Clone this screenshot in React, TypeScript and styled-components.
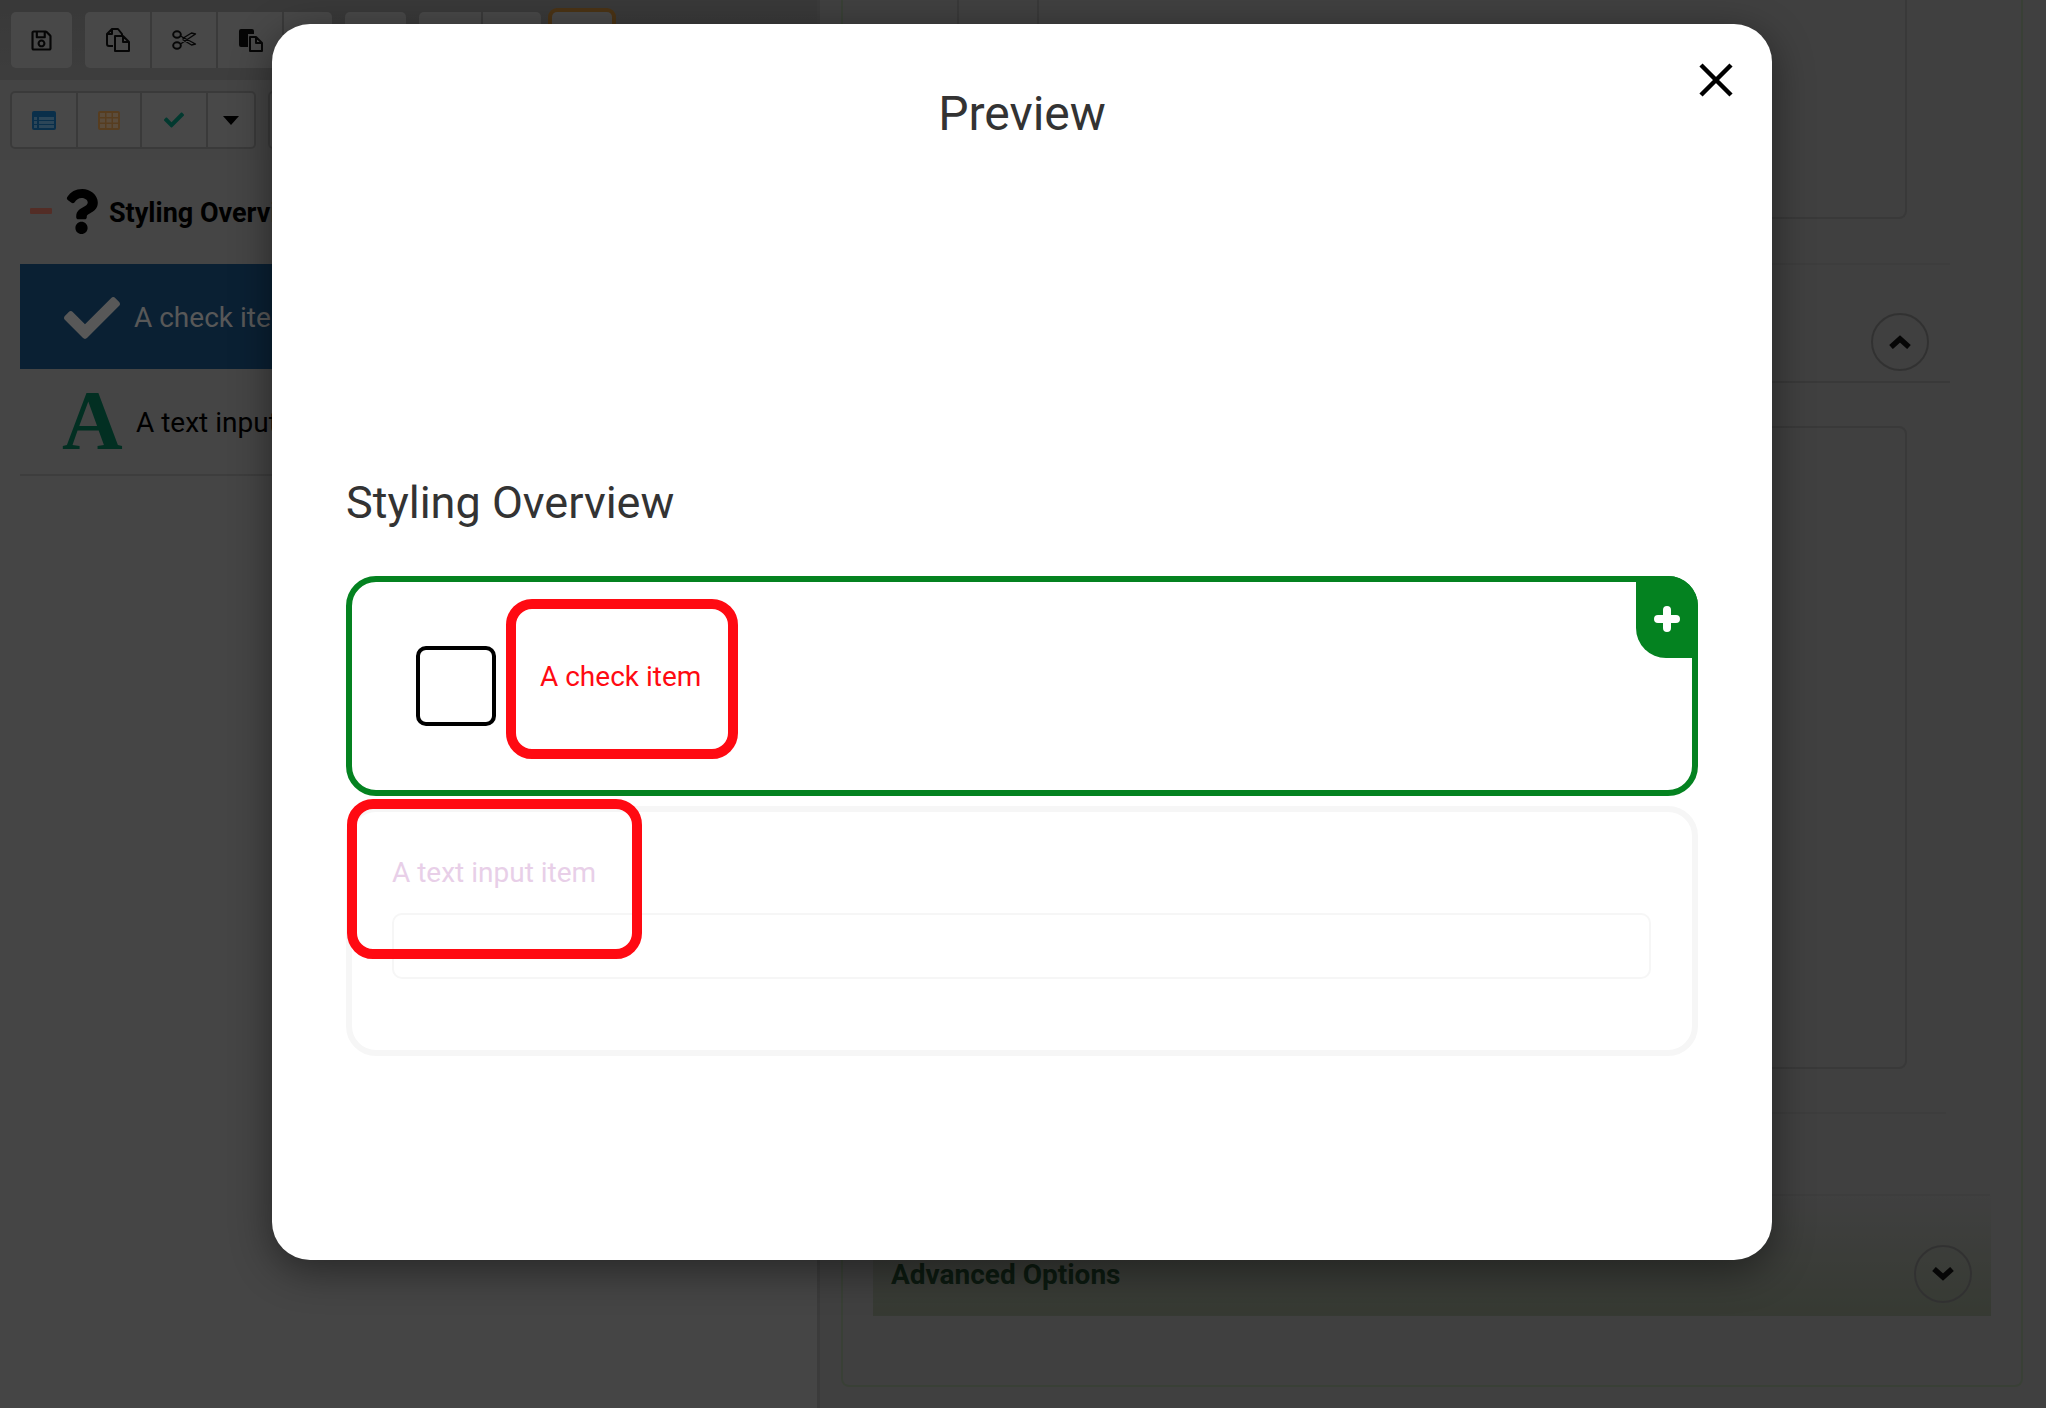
import React from "react";
import styled, { createGlobalStyle } from "styled-components";
import { FaCheck, FaQuestion, FaRegSave } from "react-icons/fa";

const Global = createGlobalStyle`
  html, body { margin: 0; padding: 0; background: #a0a0a0; }
  body { font-family: Roboto, "Liberation Sans", sans-serif; }
`;

const Page = styled.div`
  position: relative;
  width: 2046px;
  height: 1408px;
  overflow: hidden;
  display: flex;
`;

const LeftPanel = styled.aside`
  width: 820px;
  flex: none;
  background: #acacac;
  border-right: 3px solid #949494;
  box-sizing: border-box;
`;

const ToolRow = styled.div<{ $dark?: boolean }>`
  height: 80px;
  box-sizing: border-box;
  display: flex;
  align-items: center;
  gap: 13px;
  padding: 0 0 0 11px;
  background: ${(p) => (p.$dark ? "linear-gradient(#8e8e8e, #9a9a9a)" : "#aaaaaa")};
`;

const ToolGroup = styled.div<{ $framed?: boolean; $focus?: boolean }>`
  display: flex;
  height: ${(p) => (p.$framed ? 58 : 56)}px;
  box-sizing: border-box;
  border-radius: 5px;
  background: #b4b4b4;
  ${(p) => p.$framed && "border: 2px solid #929292; margin-left: -1px;"}
  ${(p) => p.$focus && "box-shadow: 0 0 0 4px #b98035; margin-left: -2px;"}
`;

const ToolButton = styled.div<{ $w: number }>`
  width: ${(p) => p.$w}px;
  display: flex;
  align-items: center;
  justify-content: center;
  color: #111;
  box-sizing: border-box;
  & + & { border-left: 2px solid #929292; }
`;

const Tree = styled.div`
  padding: 13px 0 0 20px;
`;

const TreeHeader = styled.div`
  height: 80px;
  margin: 0 0 11px 10px;
  display: flex;
  align-items: center;
`;

const Minus = styled.span`
  width: 22px;
  height: 6px;
  margin-top: -5px;
  border-radius: 1px;
  background: #d07060;
  margin-right: 7px;
`;

const QuestionMark = styled.span`
  display: flex;
  margin-top: -4px;
  color: #000;
`;

const Heading = styled.span`
  font-size: 27px;
  font-weight: 700;
  color: #000;
  margin-left: 5px;
  white-space: nowrap;
`;

const TreeItem = styled.div<{ $selected?: boolean }>`
  height: 105px;
  box-sizing: border-box;
  padding: 2px 0 0 44px;
  display: flex;
  align-items: center;
  gap: ${(p) => (p.$selected ? 14 : 14)}px;
  font-size: 28px;
  white-space: nowrap;
  background: ${(p) => (p.$selected ? "#195080" : "transparent")};
  color: ${(p) => (p.$selected ? "#dcdcdc" : "#000")};
`;

const FontGlyph = styled.span`
  width: 60px;
  margin-left: -2px;
  margin-top: -3px;
  font-family: "Liberation Serif", serif;
  font-weight: 700;
  font-size: 84px;
  line-height: 1;
  color: #057555;
`;

const TreeRule = styled.div`
  height: 2px;
  background: #999;
`;

const RightPanel = styled.main`
  flex: 1;
  background: #a0a0a0;
  padding: 0 0 21px 21px;
  box-sizing: border-box;
  display: flex;
`;

const OuterCard = styled.section`
  width: 1182px;
  box-sizing: border-box;
  border: 2px solid #90a087;
  border-top: 0;
  border-radius: 0 0 8px 8px;
  padding: 0 0 69px 30px;
  display: flex;
  flex-direction: column;
`;

const Editor = styled.div<{ $h: number; $top?: boolean }>`
  width: 950px;
  height: ${(p) => p.$h}px;
  flex: none;
  margin-left: 84px;
  box-sizing: border-box;
  border: 2px solid #8e8e8e;
  ${(p) =>
    p.$top
      ? `border-top: 0; border-radius: 0 0 8px 8px;
         &::before { content: ""; display: block; width: 78px; height: 100%; border-right: 2px solid #8e8e8e; }`
      : "border-radius: 8px;"}
`;

const SectionHead = styled.div<{ $mt: number; $h: number }>`
  width: 1077px;
  height: ${(p) => p.$h}px;
  flex: none;
  margin-top: ${(p) => p.$mt}px;
  box-sizing: border-box;
  border-top: 2px solid #9a9a9a;
  border-bottom: 2px solid #8e8e8e;
  display: flex;
  align-items: flex-end;
  justify-content: flex-end;
  padding: 0 21px 10px 0;
`;

const Spacer = styled.div<{ $h: number }>`
  height: ${(p) => p.$h}px;
  flex: none;
`;

const PlainRule = styled.div<{ $w: number; $mt: number }>`
  width: ${(p) => p.$w}px;
  height: 2px;
  flex: none;
  margin-top: ${(p) => p.$mt}px;
  background: #9a9a9a;
`;

const AdvancedBand = styled.div`
  width: 1118px;
  height: 120px;
  flex: none;
  box-sizing: border-box;
  padding: 36px 19px 0 18px;
  display: flex;
  align-items: center;
  justify-content: space-between;
  background: linear-gradient(#a0a0a0, #88917f);
`;

const AdvancedLabel = styled.span`
  font-size: 28px;
  font-weight: 700;
  color: #1e4228;
`;

const Round = styled.div`
  width: 58px;
  height: 58px;
  border-radius: 50%;
  border: 2px solid #7c7c7c;
  box-sizing: border-box;
  display: flex;
  align-items: center;
  justify-content: center;
`;

const Backdrop = styled.div`
  position: absolute;
  inset: 0;
  background: rgba(0, 0, 0, 0.6);
  display: flex;
  justify-content: center;
  align-items: flex-start;
  padding: 24px 2px 0 0;
`;

const Modal = styled.div`
  position: relative;
  width: 1500px;
  height: 1236px;
  box-sizing: border-box;
  background: #fff;
  border-radius: 38px;
  box-shadow: 0 10px 40px rgba(0, 0, 0, 0.45);
  padding: 60px 74px 0;
`;

const CloseButton = styled.button`
  position: absolute;
  top: 34px;
  right: 34px;
  width: 44px;
  height: 44px;
  padding: 0;
  border: 0;
  background: none;
  display: flex;
  align-items: center;
  justify-content: center;
`;

const Title = styled.h1`
  margin: 0;
  text-align: center;
  font-size: 48px;
  line-height: 60px;
  font-weight: 400;
  color: #333;
`;

const Subtitle = styled.h2`
  margin: 329px 0 0;
  font-size: 45px;
  line-height: 60px;
  font-weight: 400;
  color: #333;
`;

const CheckTile = styled.div`
  position: relative;
  margin-top: 43px;
  height: 220px;
  box-sizing: border-box;
  border: 6px solid #048220;
  border-radius: 30px;
  padding: 17px 0 0 64px;
  display: flex;
  align-items: flex-start;
  gap: 10px;
`;

const Corner = styled.div`
  position: absolute;
  top: -6px;
  right: -6px;
  width: 62px;
  height: 82px;
  padding-top: 4px;
  box-sizing: border-box;
  background: #048220;
  border-radius: 0 30px 0 30px;
  display: flex;
  align-items: center;
  justify-content: center;
`;

const CheckBox = styled.div`
  width: 80px;
  height: 80px;
  margin-top: 47px;
  box-sizing: border-box;
  border: 4px solid #000;
  border-radius: 10px;
  flex: none;
`;

const Highlight = styled.div`
  width: 232px;
  height: 160px;
  box-sizing: border-box;
  border: 10px solid #ff0a12;
  border-radius: 26px;
  color: #ff0a12;
  font-size: 28px;
  line-height: 40px;
  padding: 48px 0 0 24px;
  white-space: nowrap;
`;

const TextTile = styled.div`
  position: relative;
  margin-top: 10px;
  height: 250px;
  box-sizing: border-box;
  border: 6px solid #f6f6f6;
  border-radius: 30px;
  padding: 41px 41px 0 40px;
`;

const TextLabel = styled.div`
  font-size: 28px;
  line-height: 40px;
  color: #e8cfe8;
`;

const HighlightOutline = styled.div`
  position: absolute;
  top: -13px;
  left: -5px;
  width: 295px;
  height: 160px;
  box-sizing: border-box;
  border: 10px solid #ff0a12;
  border-radius: 26px;
`;

const TextBox = styled.div`
  margin-top: 20px;
  height: 66px;
  box-sizing: border-box;
  border: 2px solid #f6f6f6;
  border-radius: 10px;
`;

const CopyIcon = () => (
  <svg width="24" height="24" viewBox="0 0 24 24" fill="none" stroke="#111" strokeWidth="2">
    <path d="M6 1h6l4 5v2M1 6l5-5v5zM1 6v10q0 2 2 2h4" strokeLinejoin="round" />
    <path d="M9 8h8l6 6v9H9zM17 8v6h6" fill="#b4b4b4" strokeLinejoin="round" />
  </svg>
);

const ScissorsIcon = () => (
  <svg width="25" height="20" viewBox="0 0 25 20" fill="none" stroke="#111" strokeWidth="2">
    <ellipse cx="5" cy="4.5" rx="3.8" ry="3.2" />
    <ellipse cx="5" cy="15.5" rx="3.8" ry="3.2" />
    <path d="M8.5 6l15 8-4 1-9-5.5M8.5 14l15-10-4-1-9 5.5" strokeWidth="1.4" strokeLinejoin="round" />
  </svg>
);

const PasteIcon = () => (
  <svg width="25" height="24" viewBox="0 0 25 24">
    <path d="M1 3q0-2 2-2h11q2 0 2 2v3H10v13H3q-2 0-2-2z" fill="#111" />
    <path d="M12 9h6l6 6v8H12zM18 9v6h6" fill="#b4b4b4" stroke="#111" strokeWidth="2" strokeLinejoin="round" />
  </svg>
);

const ListIcon = () => (
  <svg width="24" height="19" viewBox="0 0 24 19">
    <rect width="24" height="19" rx="2" fill="#1a76b8" />
    <path d="M2 6h3v3H2zM7 6h15v3H7zM2 10h3v3H2zM7 10h15v3H7zM2 14h3v3H2zM7 14h15v3H7z" fill="#a9d6f2" opacity="0.6" />
  </svg>
);

const GridIcon = () => (
  <svg width="22" height="19" viewBox="0 0 22 19">
    <rect width="22" height="19" rx="2" fill="#d9984f" />
    <path d="M2 2h5v4H2zM8.5 2h5v4h-5zM15 2h5v4h-5zM2 7.5h5v4H2zM8.5 7.5h5v4h-5zM15 7.5h5v4h-5zM2 13h5v4H2zM8.5 13h5v4h-5zM15 13h5v4h-5z" fill="#e8d0b0" opacity="0.7" />
  </svg>
);

const CaretIcon = () => (
  <svg width="16" height="9" viewBox="0 0 16 9">
    <polygon points="0,0 16,0 8,9" fill="#000" />
  </svg>
);

const Chevron = ({ up }: { up?: boolean }) => (
  <svg width="22" height="14" viewBox="0 0 22 14" fill="none" stroke="#111" strokeWidth="5.5">
    <polyline points={up ? "2,12 11,4 20,12" : "2,2 11,10 20,2"} />
  </svg>
);

const CloseIcon = () => (
  <svg width="34" height="34" viewBox="0 0 34 34" stroke="#000" strokeWidth="4.5">
    <path d="M2 2l30 30M32 2L2 32" />
  </svg>
);

const PlusIcon = () => (
  <svg width="26" height="26" viewBox="0 0 26 26" stroke="#fff" strokeWidth="8" strokeLinecap="round">
    <path d="M13 4v18M4 13h18" />
  </svg>
);

export default function App() {
  return (
    <Page>
      <Global />
      <LeftPanel>
        <ToolRow $dark>
          <ToolGroup>
            <ToolButton $w={61}><FaRegSave size={23} /></ToolButton>
          </ToolGroup>
          <ToolGroup>
            <ToolButton $w={65}><CopyIcon /></ToolButton>
            <ToolButton $w={66}><ScissorsIcon /></ToolButton>
            <ToolButton $w={66}><PasteIcon /></ToolButton>
            <ToolButton $w={50} />
          </ToolGroup>
          <ToolGroup>
            <ToolButton $w={61} />
          </ToolGroup>
          <ToolGroup>
            <ToolButton $w={62} />
            <ToolButton $w={60} />
          </ToolGroup>
          <ToolGroup $focus>
            <ToolButton $w={60} />
          </ToolGroup>
        </ToolRow>
        <ToolRow>
          <ToolGroup $framed>
            <ToolButton $w={64}><ListIcon /></ToolButton>
            <ToolButton $w={64}><GridIcon /></ToolButton>
            <ToolButton $w={66}><FaCheck size={20} color="#059077" /></ToolButton>
            <ToolButton $w={48}><CaretIcon /></ToolButton>
          </ToolGroup>
          <ToolGroup $framed>
            <ToolButton $w={60} />
          </ToolGroup>
        </ToolRow>
        <Tree>
          <TreeHeader>
            <Minus />
            <QuestionMark><FaQuestion size={45} /></QuestionMark>
            <Heading>Styling Overview</Heading>
          </TreeHeader>
          <TreeItem $selected>
            <FaCheck size={56} color="#dcdcdc" />
            <span>A check item</span>
          </TreeItem>
          <TreeItem>
            <FontGlyph>A</FontGlyph>
            <span>A text input item</span>
          </TreeItem>
          <TreeRule />
        </Tree>
      </LeftPanel>
      <RightPanel>
        <OuterCard>
          <Editor $h={219} $top />
          <SectionHead $mt={44} $h={120}>
            <Round><Chevron up /></Round>
          </SectionHead>
          <Spacer $h={43} />
          <Editor $h={643} />
          <PlainRule $w={1073} $mt={43} />
          <PlainRule $w={1117} $mt={80} />
          <AdvancedBand>
            <AdvancedLabel>Advanced Options</AdvancedLabel>
            <Round><Chevron /></Round>
          </AdvancedBand>
        </OuterCard>
      </RightPanel>
      <Backdrop>
        <Modal>
          <CloseButton aria-label="Close"><CloseIcon /></CloseButton>
          <Title>Preview</Title>
          <Subtitle>Styling Overview</Subtitle>
          <CheckTile>
            <CheckBox />
            <Highlight>A check item</Highlight>
            <Corner><PlusIcon /></Corner>
          </CheckTile>
          <TextTile>
            <TextLabel>A text input item</TextLabel>
            <TextBox />
            <HighlightOutline />
          </TextTile>
        </Modal>
      </Backdrop>
    </Page>
  );
}
